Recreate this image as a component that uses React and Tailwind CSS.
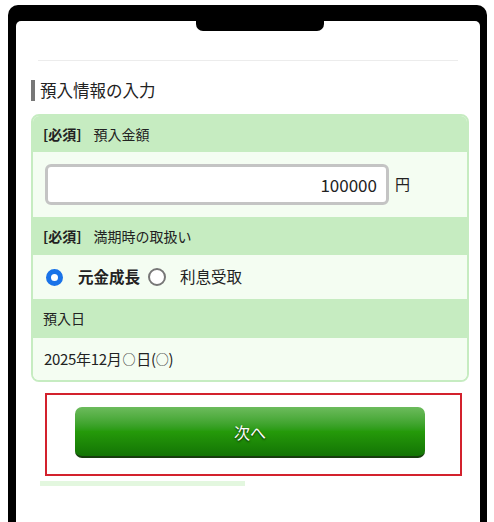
export default function App() {
    const font = { fontFamily: '"Noto Sans CJK JP", "Noto Sans", sans-serif' };

    return (
        <div className="w-[494px] h-[522px] overflow-hidden bg-white pt-[5px] pl-[8px]" style={font}>
            {/* phone frame */}
            <div className="w-[479px] h-[530px] bg-black rounded-t-[10px] pt-[16px] pl-[8px] pr-[7px]">
                <div className="relative h-full bg-white rounded-t-[5px] pt-[39px]">
                    {/* notch */}
                    <div className="absolute left-[180px] top-0 w-[128px] h-[10px] bg-black rounded-b-[7px]" />

                    <div className="mx-[22px] h-px bg-[#ececec]" />

                    {/* heading */}
                    <div className="mt-[19px] ml-[15px] flex items-center h-[21px]">
                        <div className="w-[4px] h-[21px] bg-[#777777]" />
                        <h2 className="ml-[5px] text-[16.5px] leading-none text-[#222]">預入情報の入力</h2>
                    </div>

                    {/* form card */}
                    <div className="mt-[13px] ml-[15px] w-[438px] rounded-[8px] border-2 border-[#c6ecc1] overflow-hidden text-[#222]">
                        <div className="h-[36px] bg-[#c6ecc1] flex items-center pl-[10px] text-[14px]">
                            <span className="font-bold">[必須]</span>
                            <span className="ml-[12px]">預入金額</span>
                        </div>
                        <div className="h-[65px] bg-[#f4fdf2] flex items-center pl-[12px]">
                            <div className="w-[344px] h-[41px] rounded-[6px] border-[3px] border-[#c4c4c4] bg-white flex items-center justify-end pr-[9px] text-[17px]">
                                100000
                            </div>
                            <span className="ml-[6px] text-[15px]">円</span>
                        </div>
                        <div className="h-[38px] bg-[#c6ecc1] flex items-center pl-[10px] text-[14px]">
                            <span className="font-bold">[必須]</span>
                            <span className="ml-[12px]">満期時の取扱い</span>
                        </div>
                        <div className="h-[44px] bg-[#f4fdf2] flex items-center pl-[13px] text-[15.5px]">
                            <span className="w-[17px] h-[17px] rounded-full border-[5px] border-[#1a73e8] bg-white" />
                            <span className="ml-[15px] font-bold">元金成長</span>
                            <span className="ml-[8px] w-[18px] h-[18px] rounded-full border-2 border-[#777] bg-white" />
                            <span className="ml-[14px]">利息受取</span>
                        </div>
                        <div className="h-[39px] bg-[#c6ecc1] flex items-center pl-[10px] text-[14px]">
                            預入日
                        </div>
                        <div className="h-[42px] bg-[#f4fdf2] flex items-center pl-[11px] text-[15px] tracking-[-0.3px]">
                            2025年12月<span className="text-[13px] mx-[1px]">○</span>日(<span className="text-[13px]">○</span>)
                        </div>
                    </div>

                    {/* next button */}
                    <div className="mt-[11px] ml-[29px] w-[417px] h-[83px] border-2 border-[#d3212d] pt-[12px] pl-[28px]">
                        <button className="w-[350px] h-[51px] rounded-[7px] border-b-2 border-[#173d0e] bg-gradient-to-b from-[#6cbb5c] via-[#259a0a] to-[#137405] text-white text-[16px] [text-shadow:0_1px_2px_rgba(0,0,0,0.8)]">
                            次へ
                        </button>
                    </div>

                    <div className="mt-[5px] ml-[24px] w-[205px] h-[5px] bg-[#e3f7df]" />
                </div>
            </div>
        </div>
    );
}
